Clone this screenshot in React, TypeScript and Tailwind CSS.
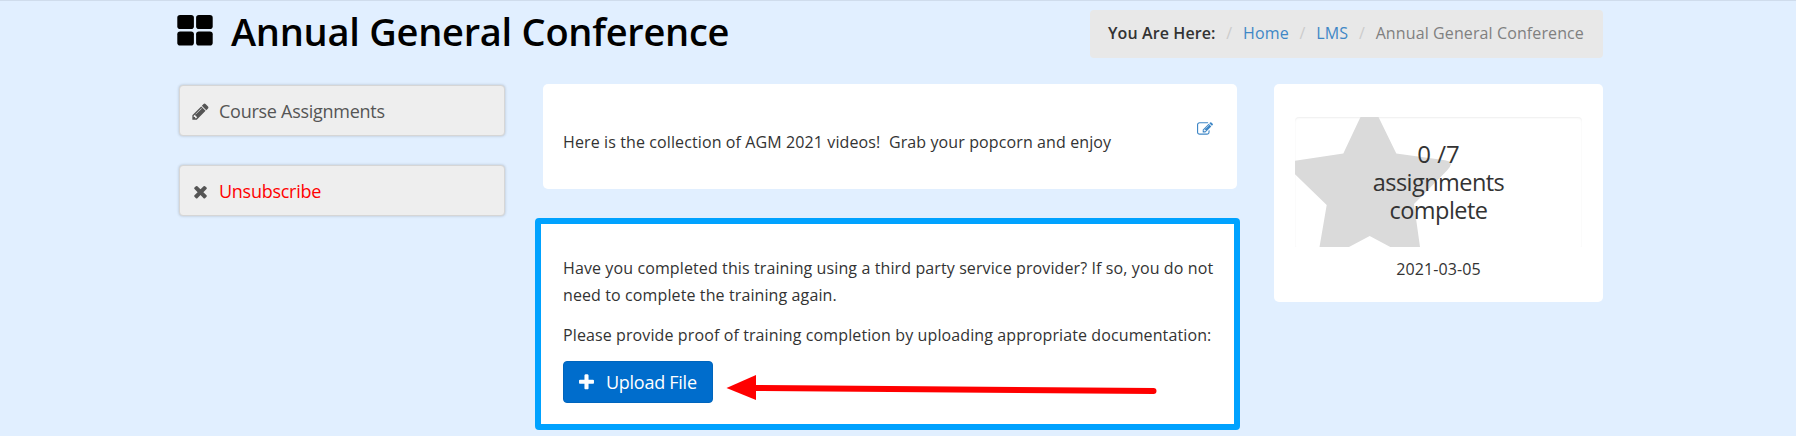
import React from "react";

const icons = {
  pencil:
    "M491 1536l91-91-235-235-91 91v107h128v128h107zm523-928q0-22-22-22-10 0-17 7l-542 542q-7 7-7 17 0 22 22 22 10 0 17-7l542-542q7-7 7-17zm-54-192l416 416-832 832h-416v-416zm683 96q0 53-37 90l-166 166-416-416 166-165q36-38 90-38 53 0 91 38l235 234q37 39 37 91z",
  times:
    "M1490 1322q0 40-28 68l-136 136q-28 28-68 28t-68-28l-294-294-294 294q-28 28-68 28t-68-28l-136-136q-28-28-28-68t28-68l294-294-294-294q-28-28-28-68t28-68l136-136q28-28 68-28t68 28l294 294 294-294q28-28 68-28t68 28l136 136q28 28 28 68t-28 68l-294 294 294 294q28 28 28 68z",
  plus:
    "M1600 736v192q0 40-28 68t-68 28h-416v416q0 40-28 68t-68 28h-192q-40 0-68-28t-28-68v-416h-416q-40 0-68-28t-28-68v-192q0-40 28-68t68-28h416v-416q0-40 28-68t68-28h192q40 0 68 28t28 68v416h416q40 0 68 28t28 68z",
  edit:
    "M888 1184l116-116-152-152-116 116v56h96v96h56zm440-720q-16-16-33 1l-350 350q-17 17-1 33t33-1l350-350q17-17 1-33zm80 594v190q0 119-84.5 203.5t-203.5 84.5h-832q-119 0-203.5-84.5t-84.5-203.5v-832q0-119 84.5-203.5t203.5-84.5h832q63 0 117 25 15 7 18 23 3 17-9 29l-49 49q-14 14-32 8-23-6-45-6h-832q-66 0-113 47t-47 113v832q0 66 47 113t113 47h832q66 0 113-47t47-113v-126q0-13 9-22l64-64q15-15 35-7t20 29zm-96-738l288 288-672 672h-288v-288zm444 132l-92 92-288-288 92-92q28-28 68-28t68 28l152 152q28 28 28 68t-28 68z",
};

function Icon({ name, className }: { name: keyof typeof icons; className: string }) {
  return (
    <svg viewBox="0 0 1792 1792" fill="currentColor" className={className} aria-hidden="true">
      <path d={icons[name]} />
    </svg>
  );
}

function SideLink({ icon, label, className }: { icon: "pencil" | "times"; label: string; className: string }) {
  return (
    <a
      href="#"
      className="flex h-[51px] w-[326px] items-center rounded-[4px] border border-[#d6d6d6] bg-[#eeeeee] pl-[11px] pt-[2px] text-[18px] tracking-[-0.27px] shadow-[0_0_3px_rgba(0,0,0,0.22)]"
    >
      <Icon name={icon} className="size-[19px] shrink-0 text-[#555555]" />
      <span className={className}>{label}</span>
    </a>
  );
}

function Slash() {
  return <span className="w-[27.500px] text-center text-[#cccccc]">/</span>;
}

export default function App() {
  return (
    <div className="h-[436px] w-[1796px] overflow-hidden border-t border-[#cfdcec] bg-[#e1efff] pl-[177px] font-['Open_Sans',sans-serif] text-[16px] tracking-[0.11px] text-[#333333]">
      <header className="flex h-[83px] w-[1426px] items-start justify-between">
        <div className="flex">
          <svg viewBox="0 0 36 31" className="mt-[14px] h-[31px] w-[36px]" fill="#000" aria-hidden="true">
            <rect x="0.3" y="0" width="16.6" height="14" rx="2.8" />
            <rect x="19.1" y="0" width="16.6" height="14" rx="2.8" />
            <rect x="0.3" y="16.5" width="16.6" height="14" rx="2.8" />
            <rect x="19.1" y="16.5" width="16.6" height="14" rx="2.8" />
          </svg>
          <h1 className="ml-[18px] mt-[3px] whitespace-nowrap text-[38px] font-semibold leading-[54px] tracking-[-0.26px] text-black">
            Annual General Conference
          </h1>
        </div>
        <nav className="mt-[9px] flex h-[48px] w-[513px] items-center whitespace-nowrap rounded-[4px] bg-[#e8e8e8] pb-[2px] pl-[18px]">
          <span className="font-semibold">You Are Here:</span>
          <Slash />
          <a href="#" className="text-[#3f87c6]">Home</a>
          <Slash />
          <a href="#" className="text-[#3f87c6]">LMS</a>
          <Slash />
          <span className="text-[#808080]">Annual General Conference</span>
        </nav>
      </header>

      <div className="flex items-start">
        <aside className="ml-[2px] mt-[1px] flex flex-col gap-[29px]">
          <SideLink icon="pencil" label="Course Assignments" className="ml-[9px] text-[#555555]" />
          <SideLink icon="times" label="Unsubscribe" className="ml-[9px] text-[#ff0000]" />
        </aside>

        <main className="ml-[30px] flex w-[705px] flex-col">
          <section className="ml-[8px] flex h-[105px] w-[694px] justify-between rounded-[5px] bg-white pl-[20px] pr-[24px]">
            <p className="mt-[45px] whitespace-pre leading-[27px]">
              {"Here is the collection of AGM 2021 videos!  Grab your popcorn and enjoy"}
            </p>
            <Icon name="edit" className="mt-[37px] size-[16px] text-[#3f87c6]" />
          </section>

          <section className="mt-[29px] h-[212px] w-[705px] rounded-[4px] border-[6px] border-[#00a2ff] bg-white pl-[22px] pt-[31px]">
            <p className="w-[670px] leading-[27px]">
              Have you completed this training using a third party service provider? If so, you do not
              <br />
              need to complete the training again.
            </p>
            <p className="mt-[13px] whitespace-nowrap leading-[27px]">
              Please provide proof of training completion by uploading appropriate documentation:
            </p>
            <div className="mt-[12px] flex">
              <button className="flex h-[42px] w-[150px] shrink-0 items-center rounded-[4px] border border-[#0065bd] bg-[#006dcc] pl-[13px] pt-[1px] text-[18px] tracking-[-0.27px] text-white">
                <Icon name="plus" className="size-[19px]" />
                <span className="ml-[10px] whitespace-nowrap">Upload File</span>
              </button>
              <svg viewBox="0 0 432 28" className="ml-[13px] mt-[14px] h-[28px] w-[432px]" aria-hidden="true">
                <path d="M28 13L427.500 16" stroke="#ff0000" strokeWidth="6" strokeLinecap="round" />
                <path d="M0.500 13L30 0V25Z" fill="#ff0000" />
              </svg>
            </div>
          </section>
        </main>

        <section className="ml-[34px] h-[218px] w-[329px] rounded-[5px] bg-white px-[21px] pt-[33px] text-center">
          <div className="relative h-[130px] w-[287px] overflow-hidden rounded-t-[4px] shadow-[inset_0_1px_2px_rgba(0,0,0,0.07)]">
            <svg viewBox="0 0 287 130" className="absolute inset-0 h-[130px] w-[287px]" aria-hidden="true">
              <path
                d="M65.500 0H83.500L101.300 36.500L150 43.200Q156.500 44.300 156 47Q155.500 50 152 53.500L119 87L125 130H95.300L74.700 119L54 130H24.500L31.700 88L0 57.300V43.700L48.300 36.500Z"
                fill="#dadada"
              />
            </svg>
            <div className="relative pt-[23px]">
              <div className="mb-[1px] text-[24px] leading-[28px] tracking-normal">0 /7</div>
              <div className="text-[23.500px] leading-[27.500px] tracking-[-0.55px]">
                assignments
                <br />
                complete
              </div>
            </div>
          </div>
          <p className="mt-[9px] leading-[27px]">2021-03-05</p>
        </section>
      </div>
    </div>
  );
}
